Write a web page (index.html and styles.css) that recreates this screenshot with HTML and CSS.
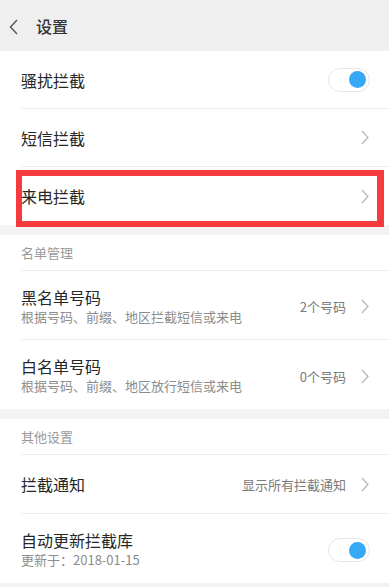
FILE: index.html
```html
<!DOCTYPE html>
<html lang="zh-CN">
<head>
<meta charset="utf-8">
<title>设置</title>
<link rel="stylesheet" href="styles.css">
</head>
<body>
<div class="page">
  <header class="topbar">
    <svg class="back" width="9" height="16" viewBox="0 0 9 16"><path d="M8 1 L1.5 8 L8 15" fill="none" stroke="#555" stroke-width="1.4"/></svg>
    <span class="title">设置</span>
  </header>

  <section class="group">
    <div class="row">
      <span class="label">骚扰拦截</span>
      <span class="toggle"><span class="knob"></span></span>
    </div>
    <div class="row">
      <span class="label">短信拦截</span>
      <svg class="chev" width="8" height="15" viewBox="0 0 8 15"><path d="M1 1 L7 7.5 L1 14" fill="none" stroke="#b5b5b5" stroke-width="1.2"/></svg>
    </div>
    <div class="row last highlight">
      <span class="label">来电拦截</span>
      <svg class="chev" width="8" height="15" viewBox="0 0 8 15"><path d="M1 1 L7 7.5 L1 14" fill="none" stroke="#b5b5b5" stroke-width="1.2"/></svg>
      <span class="mark"></span>
    </div>
  </section>

  <section class="group spaced">
    <div class="section-head">名单管理</div>
    <div class="row tall">
      <div class="texts">
        <span class="label">黑名单号码</span>
        <span class="sub">根据号码、前缀、地区拦截短信或来电</span>
      </div>
      <span class="value">2个号码</span>
      <svg class="chev" width="8" height="15" viewBox="0 0 8 15"><path d="M1 1 L7 7.5 L1 14" fill="none" stroke="#b5b5b5" stroke-width="1.2"/></svg>
    </div>
    <div class="row tall last">
      <div class="texts">
        <span class="label">白名单号码</span>
        <span class="sub">根据号码、前缀、地区放行短信或来电</span>
      </div>
      <span class="value">0个号码</span>
      <svg class="chev" width="8" height="15" viewBox="0 0 8 15"><path d="M1 1 L7 7.5 L1 14" fill="none" stroke="#b5b5b5" stroke-width="1.2"/></svg>
    </div>
  </section>

  <section class="group spaced">
    <div class="section-head">其他设置</div>
    <div class="row mid">
      <span class="label">拦截通知</span>
      <span class="value">显示所有拦截通知</span>
      <svg class="chev" width="8" height="15" viewBox="0 0 8 15"><path d="M1 1 L7 7.5 L1 14" fill="none" stroke="#b5b5b5" stroke-width="1.2"/></svg>
    </div>
    <div class="row tall last">
      <div class="texts">
        <span class="label">自动更新拦截库</span>
        <span class="sub">更新于：2018-01-15</span>
      </div>
      <span class="toggle"><span class="knob"></span></span>
    </div>
  </section>
</div>
</body>
</html>
```

FILE: styles.css
```css
* { box-sizing: border-box; }
html, body {
  margin: 0;
  padding: 0;
  background: #f3f3f3;
  font-family: "Noto Sans CJK SC", "Noto Sans", sans-serif;
  color: #262626;
}
.page {
  width: 389px;
  min-height: 587px;
  background: #f3f3f3;
}
.topbar {
  height: 51px;
  background: #efefef;
  display: flex;
  align-items: center;
  padding-left: 9px;
  gap: 18px;
}
.back { display: block; margin-top: 2px; }
.title {
  font-size: 16px;
  font-weight: 500;
  color: #333;
  line-height: 20px;
}
.group {
  background: #fff;
  padding-left: 21px;
}
.group.spaced { margin-top: 10px; }
.row {
  position: relative;
  display: flex;
  align-items: center;
  height: 58px;
  padding-right: 19px;
  border-bottom: 1px solid #ececec;
}
.row.mid { height: 59px; }
.row.tall { height: 69px; padding-top: 3px; }
.row.last { border-bottom: none; }
.label {
  font-size: 16px;
  line-height: 20px;
  color: #262626;
  flex: 1;
}
.texts {
  flex: 1;
  display: flex;
  flex-direction: column;
}
.texts .label { flex: none; }
.sub {
  font-size: 13px;
  line-height: 20px;
  color: #8c8c8c;
}
.value {
  font-size: 13px;
  color: #7a7a7a;
  margin-right: 15px;
}
.chev { display: block; margin-right: 1px; }
.toggle {
  width: 42px;
  height: 24px;
  border-radius: 12px;
  border: 1px solid #e6e6e6;
  background: #fff;
  display: flex;
  align-items: center;
  justify-content: flex-end;
  padding-right: 3px;
}
.knob {
  width: 17px;
  height: 17px;
  border-radius: 50%;
  background: #35a9f6;
}
.section-head {
  height: 36px;
  display: flex;
  align-items: center;
  font-size: 13px;
  color: #9a9a9a;
  border-bottom: 1px solid #ececec;
}
.mark {
  position: absolute;
  left: -5px;
  top: 3px;
  width: 368px;
  height: 57px;
  border: 6px solid #f53b3b;
  border-right-width: 7px;
}
```
